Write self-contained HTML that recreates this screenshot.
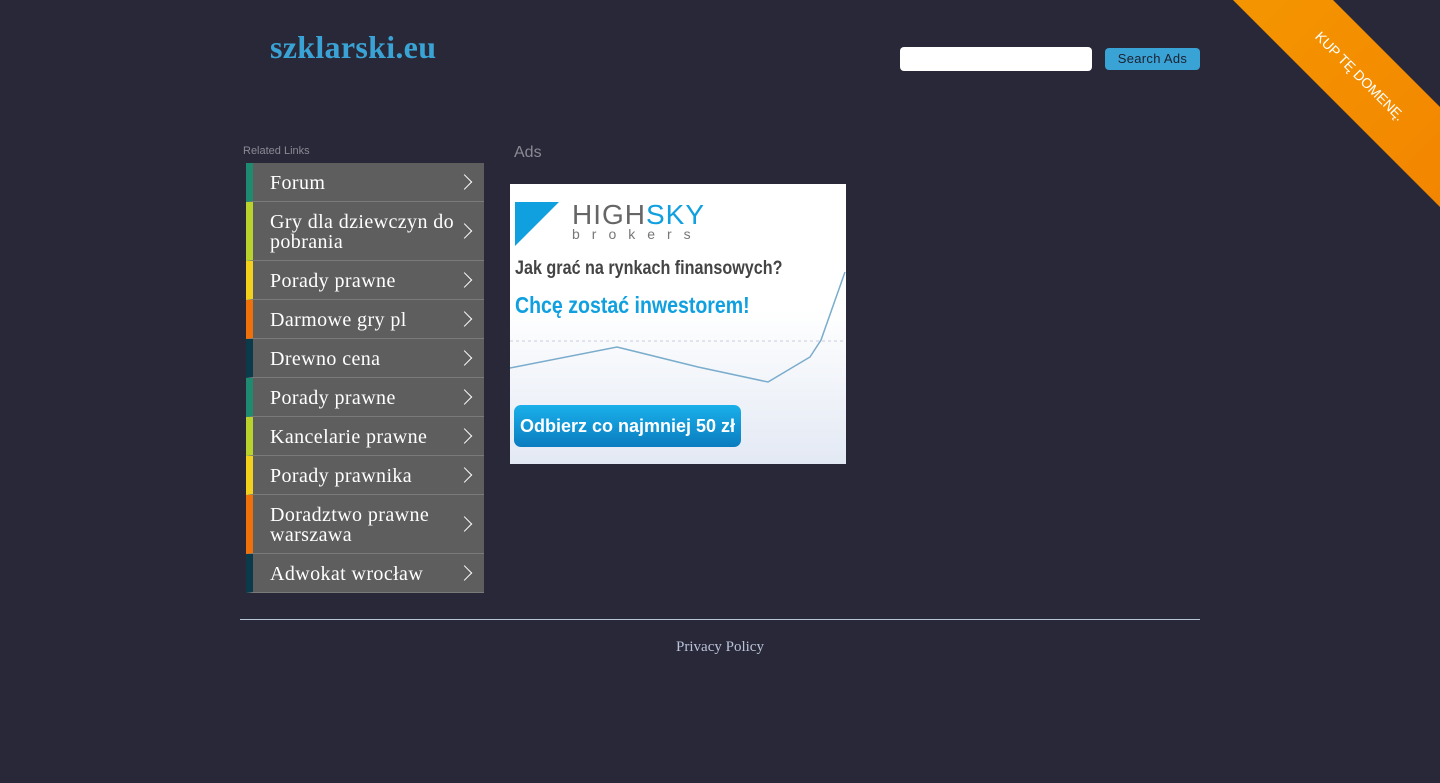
<!DOCTYPE html>
<html><head><meta charset="utf-8"><style>
body{margin:0;background:#292838;width:1440px;height:783px;overflow:hidden;position:relative;font-family:"Liberation Serif",serif}
.logo{position:absolute;left:270px;top:29px;font-size:32px;font-weight:bold;color:#3aa3d6;letter-spacing:0.3px}
.search{position:absolute;left:900px;top:47px;width:192px;height:24px;background:#fff;border-radius:4px}
.btn{position:absolute;left:1105px;top:48px;width:95px;height:22px;background:#3aa3d6;border-radius:4px;color:#1c2030;font:13px "Liberation Sans",sans-serif;text-align:center;line-height:22px;letter-spacing:0.3px}
.ribbon{position:absolute;left:0;top:0;width:1440px;height:783px;background:linear-gradient(135deg,#f07000,#f59a00 50%,#f07000);clip-path:polygon(1233px 0,1333px 0,1440px 107px,1440px 207px)}
.rtext{position:absolute;left:1300px;top:68px;width:120px;transform:rotate(45deg);color:#fff;font:14px "Liberation Sans",sans-serif;text-align:center}
.rl{position:absolute;left:243px;top:145px;font:11px "Liberation Sans",sans-serif;color:#8a8a95}
.menu{position:absolute;left:246px;top:163px;width:238px}
.it{position:relative;background:#5e5e5e;border-left:7px solid;border-bottom:1px solid #7a7a7a;color:#fff;font-size:20px;line-height:20px;padding:10px 24px 8px 17px;box-sizing:border-box;letter-spacing:0.4px}
.it.one{height:39px}.it.two{height:59px}
.it:after{content:"";position:absolute;right:14px;top:50%;width:10px;height:10px;border-right:1.5px solid #fff;border-top:1.5px solid #fff;transform:translateY(-50%) rotate(45deg)}
.ads{position:absolute;left:514px;top:144px;font:16px "Liberation Sans",sans-serif;color:#8a8a95}
.ad{position:absolute;left:510px;top:184px;width:336px;height:280px;background:linear-gradient(#fff 45%,#e3e9f4);font-family:"Liberation Sans",sans-serif}
hr{position:absolute;left:240px;top:619px;width:960px;margin:0;border:0;border-top:1px solid #b9c3d8}
.pp{position:absolute;left:0;width:1440px;top:639px;text-align:center;color:#b9c3d8;font-size:15px}
</style></head><body>
<div class="logo">szklarski.eu</div>
<div class="search"></div><div class="btn">Search Ads</div>
<div class="ribbon"></div><div class="rtext">KUP TĘ DOMENĘ.</div>
<div class="rl">Related Links</div>
<div class="menu">
<div class="it one" style="border-left-color:#1e8a70">Forum</div>
<div class="it two" style="border-left-color:#b9d22c">Gry dla dziewczyn do pobrania</div>
<div class="it one" style="border-left-color:#f2d01c">Porady prawne</div>
<div class="it one" style="border-left-color:#f0700a">Darmowe gry pl</div>
<div class="it one" style="border-left-color:#0b3a4a">Drewno cena</div>
<div class="it one" style="border-left-color:#1e8a70">Porady prawne</div>
<div class="it one" style="border-left-color:#b9d22c">Kancelarie prawne</div>
<div class="it one" style="border-left-color:#f2d01c">Porady prawnika</div>
<div class="it two" style="border-left-color:#f0700a">Doradztwo prawne warszawa</div>
<div class="it one" style="border-left-color:#0b3a4a">Adwokat wrocław</div>
</div>
<div class="ads">Ads</div>
<div class="ad">
<svg width="336" height="280" style="position:absolute;left:0;top:0"><path d="M5 18h44l-44 44z" fill="#10a0e0"/><polyline points="0,184 107,163 188,183 258,198 300,173 311,156 335,88" fill="none" stroke="#7aaccc" stroke-width="1.5"/><line x1="0" y1="157" x2="336" y2="157" stroke="#ccd" stroke-dasharray="3,3"/></svg>
<div style="position:absolute;left:62px;top:15px;font-size:28px;color:#666;letter-spacing:1px">HIGH<span style="color:#10a0e0">SKY</span></div>
<div style="position:absolute;left:62px;top:42px;font-size:14px;color:#777;letter-spacing:12px">brokers</div>
<div style="position:absolute;left:5px;top:74px;font-size:19px;font-weight:bold;color:#444;transform:scaleX(.85);transform-origin:left">Jak grać na rynkach finansowych?</div>
<div style="position:absolute;left:5px;top:108px;font-size:23px;font-weight:bold;color:#10a0e0;transform:scaleX(.85);transform-origin:left">Chcę zostać inwestorem!</div>
<div style="position:absolute;left:4px;top:221px;width:227px;height:42px;border-radius:7px;background:linear-gradient(#1ab0ea,#0a7cc0);color:#fff;font-size:18px;font-weight:bold;line-height:42px;text-align:center">Odbierz co najmniej 50 zł</div>
</div>
<hr><div class="pp">Privacy Policy</div>
</body></html>
